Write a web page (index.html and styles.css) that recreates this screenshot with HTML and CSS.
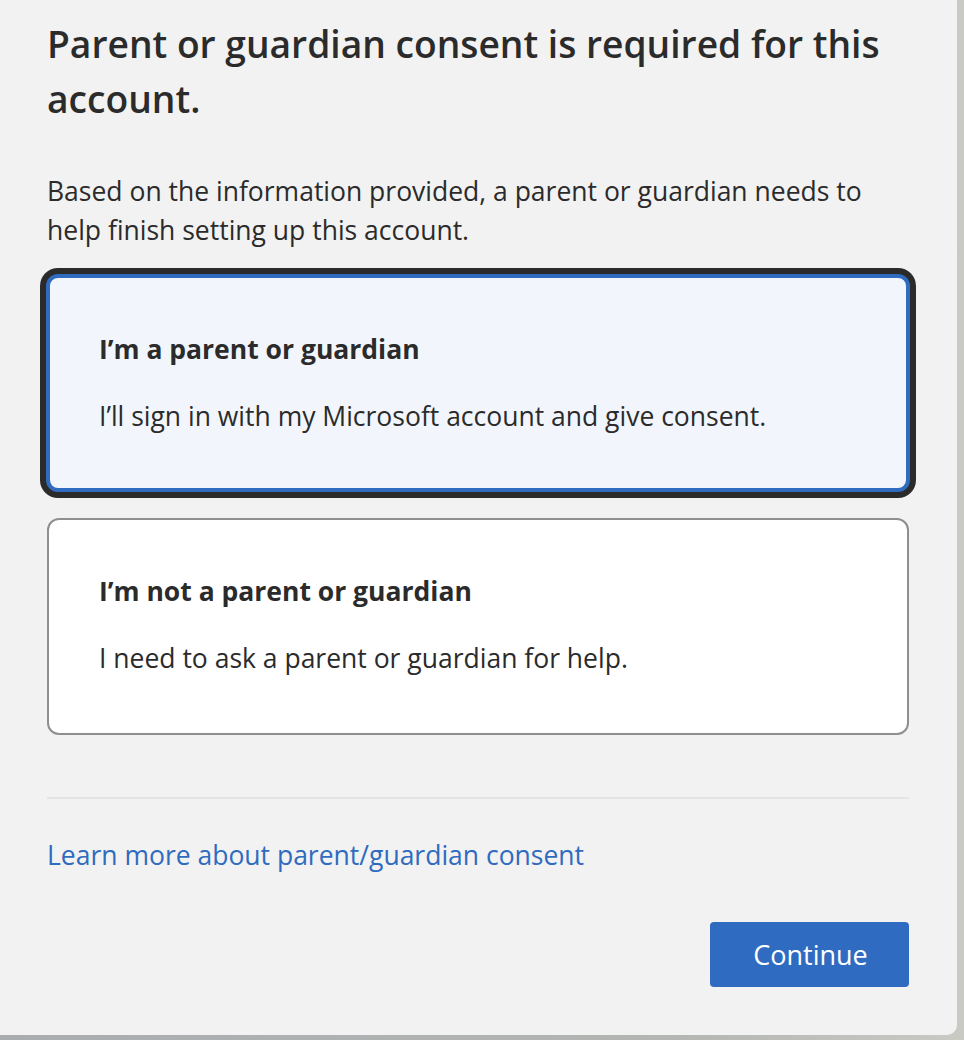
FILE: index.html
```html
<!DOCTYPE html>
<html lang="en">
<head>
<meta charset="utf-8">
<title>Parent or guardian consent</title>
<link rel="stylesheet" href="styles.css">
</head>
<body>
<main class="panel">
  <h1 class="title">Parent or guardian consent is required for this account.</h1>
  <p class="intro">Based on the information provided, a parent or guardian needs to help finish setting up this account.</p>
  <div class="options">
    <div class="option selected">
      <div class="option-title">I’m a parent or guardian</div>
      <div class="option-desc">I’ll sign in with my Microsoft account and give consent.</div>
    </div>
    <div class="option">
      <div class="option-title">I’m not a parent or guardian</div>
      <div class="option-desc">I need to ask a parent or guardian for help.</div>
    </div>
  </div>
  <hr class="divider">
  <a class="learn" href="#">Learn more about parent/guardian consent</a>
  <div class="actions">
    <button class="btn-primary" type="button">Continue</button>
  </div>
</main>
</body>
</html>
```

FILE: styles.css
```css
html, body {
  margin: 0;
  padding: 0;
}
body {
  width: 964px;
  height: 1040px;
  overflow: hidden;
  background: linear-gradient(90deg, #a9adb0 0%, #b4b6b3 70%, #c9cac4 100%);
  font-family: "Segoe UI", "Open Sans", "Noto Sans", sans-serif;
  color: #292929;
}
.panel {
  box-sizing: border-box;
  width: 957px;
  height: 1035px;
  background: #f2f2f2;
  border-bottom-right-radius: 10px;
  padding: 16px 48px 0 47px;
  display: flex;
  flex-direction: column;
}
.title {
  margin: 0;
  font-size: 37.2px;
  font-weight: 600;
  line-height: 55px;
  color: #2b2b2b;
}
.intro {
  margin: 46px 0 0;
  font-size: 26.5px;
  line-height: 39px;
  color: #2b2b2b;
}
.options {
  margin-top: 24px;
  display: flex;
  flex-direction: column;
  gap: 26px;
}
.option {
  box-sizing: border-box;
  height: 217px;
  border: 2px solid #8f8f8f;
  border-radius: 12px;
  background: #ffffff;
  padding: 53px 50px 0 50px;
}
.option.selected {
  height: 218px;
  border: 4px solid #2f6bbf;
  background: #f2f6fc;
  box-shadow: 0 0 0 6px #2b2b2b;
  margin: 0 -1px;
  padding: 53px 49px 0 49px;
}
.option-title {
  font-size: 26.5px;
  font-weight: 700;
  line-height: 36px;
  color: #2b2b2b;
}
.option-desc {
  margin-top: 31px;
  font-size: 26.5px;
  line-height: 36px;
  color: #2b2b2b;
}
.divider {
  margin: 62px 0 0;
  border: 0;
  border-top: 2px solid #e4e4e4;
  height: 0;
}
.learn {
  margin-top: 38px;
  align-self: flex-start;
  font-size: 26.5px;
  line-height: 36px;
  color: #2f6bbf;
  text-decoration: none;
}
.actions {
  margin-top: 49px;
  display: flex;
  justify-content: flex-end;
}
.btn-primary {
  width: 199px;
  height: 65px;
  border: 0;
  border-radius: 4px;
  background: #2f6bc0;
  color: #ffffff;
  font-family: inherit;
  font-size: 27px;
  padding: 0 0 0 2px;
}
```
